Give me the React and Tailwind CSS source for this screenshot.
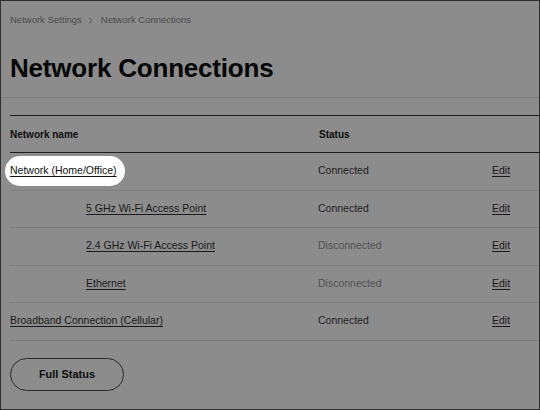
import React from 'react'

const rows = [
  { name: 'Network (Home/Office)', status: 'Connected', on: true, sub: false, spot: true },
  { name: '5 GHz Wi-Fi Access Point', status: 'Connected', on: true, sub: true },
  { name: '2.4 GHz Wi-Fi Access Point', status: 'Disconnected', on: false, sub: true },
  { name: 'Ethernet', status: 'Disconnected', on: false, sub: true },
  { name: 'Broadband Connection (Cellular)', status: 'Connected', on: true, sub: false },
]

const Row = ({ row }) => {
  return (
    <div className="grid grid-cols-[308px_174px_1fr] h-[37.5px] items-center border-b border-[#7e7e7e] text-[10.5px]">
      <div className={row.sub ? 'pl-[76px]' : ''}>
        {row.spot ? (
          <span className="-ml-[5px] inline-flex h-[30px] items-center rounded-full bg-white pl-[5px] pr-[8px]">
            <a className="text-[#111] underline underline-offset-2">{row.name}</a>
          </span>
        ) : (
          <a className="text-[#1a1a1a] underline underline-offset-2">{row.name}</a>
        )}
      </div>
      <div className={row.on ? 'text-[#202020]' : 'text-[#525252]'}>{row.status}</div>
      <div>
        <a className="text-[#1a1a1a] underline underline-offset-2">Edit</a>
      </div>
    </div>
  )
}

const App = () => {
  return (
    <div className="w-[540px] h-[410px] overflow-hidden border border-[#2e2e2e] bg-[#8c8c8c] font-['Liberation_Sans',Arial,sans-serif]">
      {/* breadcrumb */}
      <div className="flex h-[38px] items-center pl-[9px] text-[9.5px] text-[#4a4a4a]">
        <span>Network Settings</span>
        <svg className="ml-[6px] mr-[8px]" width="5" height="7" viewBox="0 0 5 7">
          <polyline points="0.8,0.6 4,3.5 0.8,6.4" fill="none" stroke="#555" strokeWidth="1" />
        </svg>
        <span>Network Connections</span>
      </div>

      <h1 className="mt-[16px] pl-[9px] text-[26px] leading-[26px] font-bold tracking-[-0.2px] text-[#050505]">
        Network Connections
      </h1>

      <div className="mt-[16px] h-px bg-[#7b7b7b]" />

      <div className="ml-[9px] mt-[17px]">
        <div className="grid grid-cols-[308px_174px_1fr] h-[38px] items-center border-y border-[#1c1c1c] text-[10px] font-bold text-[#0d0d0d]">
          <div>Network name</div>
          <div className="pl-px">Status</div>
          <div />
        </div>
        {rows.map((r) => (
          <Row key={r.name} row={r} />
        ))}
      </div>

      <div className="pl-[9px] pt-[17.5px]">
        <button className="h-[33px] w-[114px] rounded-full border border-[#2a2a2a] text-[11px] font-bold text-[#0d0d0d]">
          Full Status
        </button>
      </div>
    </div>
  )
}

export default App
